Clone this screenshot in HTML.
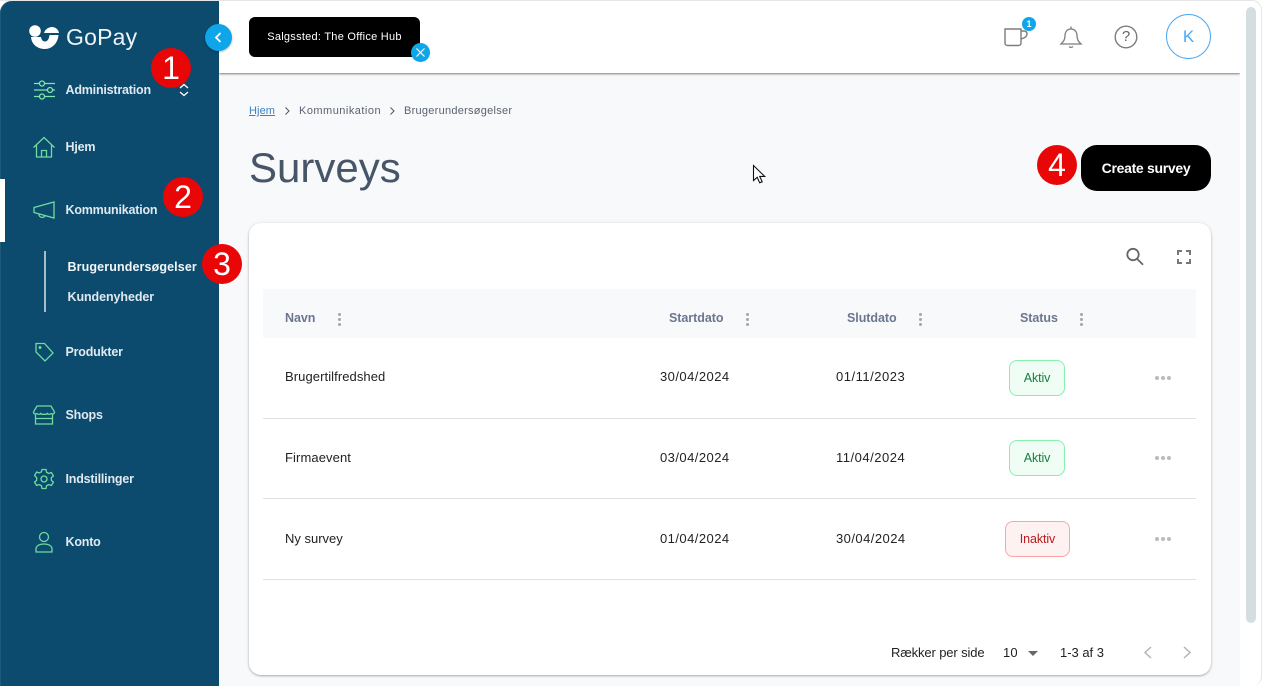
<!DOCTYPE html>
<html lang="da"><head><meta charset="utf-8"><title>Surveys</title>
<style>
*{box-sizing:border-box}
html,body{margin:0;padding:0;width:1262px;height:686px;overflow:hidden;background:#fff;font-family:"Liberation Sans",sans-serif}
.a{position:absolute;white-space:nowrap}
#win{position:absolute;left:0;top:0;width:1262px;height:686px;overflow:hidden;background:#fff}
#main{position:absolute;left:219px;top:1px;width:1021px;height:685px;background:#f8f9fb}
#head{position:absolute;left:219px;top:1px;width:1021px;height:72px;background:#fff;box-shadow:0 1px 2px rgba(0,0,0,.5);clip-path:inset(0 0 -6px 0)}
#side{position:absolute;left:0;top:1px;width:219px;height:685px;background:#0c4a6e;border-radius:12px 0 0 0;box-shadow:inset 1px 0 0 #1d5a7c}
.nav{font-size:12.5px;font-weight:bold;color:#dfe9ef;letter-spacing:-.2px;line-height:16px;left:65.500px}
.ic{position:absolute;left:32px;width:24px;height:24px;fill:none;stroke:#6fdc9f;stroke-width:1.3}
.num{position:absolute;width:40px;height:40px;border-radius:50%;background:#e90606;color:#fff;font-size:32px;line-height:40px;text-align:center}
#card{position:absolute;left:249px;top:223px;width:962px;height:452px;background:#fff;border-radius:12px;box-shadow:0 1px 2px rgba(0,0,0,.3),0 0 6px rgba(0,0,0,.05)}
.th{font-size:12.5px;font-weight:bold;color:#6b7690;line-height:16px;letter-spacing:-.05px}
.td{font-size:13px;color:#222;line-height:16px;letter-spacing:.1px}
.dt{letter-spacing:.45px}
.line{position:absolute;left:263px;width:933px;height:1px;background:#dfe1e4}
.dots{position:absolute;width:3px;height:3px;border-radius:50%;background:#a3a6ab;box-shadow:0 5px 0 #a3a6ab,0 10px 0 #a3a6ab}
.more{position:absolute;width:4px;height:4px;border-radius:50%;background:#b9bbbe;box-shadow:6px 0 0 #b9bbbe,12px 0 0 #b9bbbe}
.bg{position:absolute;border-radius:8px;font-size:12.5px;text-align:center;letter-spacing:-.1px}
.ok{left:1009px;width:56px;height:36px;line-height:34px;background:#f0fdf4;border:1px solid #86efac;color:#15803d}
.no{left:1005px;width:65px;height:36px;line-height:34px;background:#fef1f1;border:1px solid #fda4a4;color:#b91c1c}
.bc{font-size:11px;line-height:14px;color:#5b6270;top:104px}
</style></head><body><div id="win">
<div id="main"></div>
<div id="head"></div>

<!-- frame -->
<div style="position:absolute;left:0;top:0;width:1262px;height:686px;border:1px solid #e4e6e8;border-bottom:none;border-left:none;border-radius:0 10px 10px 0;pointer-events:none"></div>
<div style="position:absolute;left:1246px;top:7px;width:10px;height:616px;border-radius:5px;background:#d4dde0"></div>

<div id="side"></div>
<div style="position:absolute;left:0;top:179px;width:5px;height:63px;background:#fff"></div>

<!-- logo -->
<svg style="position:absolute;left:28px;top:24px" width="32" height="26" viewBox="0 0 32 26" fill="#fff">
<circle cx="7" cy="7" r="5.800"/>
<path d="M16 9C17 5 21 3 24 3C27.500 3 30.500 5.500 31 9Z"/>
<path d="M3 13H13C13.500 16 15 17.500 17 17.500C19.500 17.500 21 15 21.500 11H30.500C30 19 24 25 17 25C9 25 3.500 20 3 13Z"/>
</svg>
<div class="a" style="left:66px;top:22px;font-size:23px;line-height:30px;color:#eef3f6;letter-spacing:.2px">GoPay</div>
<div style="position:absolute;left:205px;top:24px;width:27px;height:27px;border-radius:50%;background:#0ea5e9;box-shadow:0 1px 2px rgba(0,0,0,.3)"></div>
<svg style="position:absolute;left:205px;top:24px" width="27" height="27" fill="none" stroke="#fff" stroke-width="1.800"><path d="M15.500 9l-4.500 4.500 4.500 4.500"/></svg>

<!-- nav -->
<svg class="ic" style="top:78px;stroke:#7fe8a8" viewBox="0 0 24 24" stroke-width="1.900"><path d="M2 5.500h5M13 5.500h10M2 12h13M21 12h2M2 18.500h5M13 18.500h10"/><circle cx="10" cy="5.500" r="2.500"/><circle cx="18" cy="12" r="2.500"/><circle cx="10" cy="18.500" r="2.500"/></svg>
<div class="a nav" style="top:82px">Administration</div>
<svg style="position:absolute;left:178px;top:83px" width="12" height="14" fill="none" stroke="#fff" stroke-width="1.300"><path d="M2 5l4-3.500L10 5M2 9l4 3.500L10 9"/></svg>

<svg class="ic" style="top:135px" viewBox="0 0 24 24"><path d="M1.500 12.500L12 2.500l10.500 10M4.500 10v12h15V10M9.500 22v-6.500h5V22"/></svg>
<div class="a nav" style="top:139px">Hjem</div>

<svg class="ic" style="top:198px" viewBox="0 0 24 24"><path d="M2 9.500L22 4v16L2 14.500zM2 9.500v5M7 16c-.5 4 5.500 4.500 6 1.500"/></svg>
<div class="a nav" style="top:202px">Kommunikation</div>

<div style="position:absolute;left:44px;top:251px;width:2px;height:61px;background:#a8bcc9"></div>
<div class="a nav" style="left:67.500px;top:259px;color:#f2f6f8;letter-spacing:.12px">Brugerundersøgelser</div>
<div class="a nav" style="left:67.500px;top:289px;letter-spacing:-.08px">Kundenyheder</div>

<svg class="ic" style="top:340px" viewBox="0 0 24 24"><path d="M4 3.500h8.500l8.500 9.500-8 8L4 12z"/><circle cx="8" cy="7.500" r=".8"/></svg>
<div class="a nav" style="top:344px">Produkter</div>

<svg class="ic" style="top:403px" viewBox="0 0 24 24"><path d="M5 3h14l3.500 6c0 2-2 2.500-3.500 1.500-1.500 1.200-3 1.200-3.500 0-1.200 1.200-5.800 1.200-7 0-.5 1.200-2 1.200-3.500 0C3.500 11.500 1.500 11 1.500 9zM3.500 11.500V21h17v-9.500M3.500 15.500h17"/></svg>
<div class="a nav" style="top:407px">Shops</div>

<svg class="ic" style="top:467px" viewBox="0 0 24 24"><circle cx="12" cy="12" r="3"/><path d="M10 2.500h4l.6 2.800 2.100 1.100 2.700-.9 2 3.400-2.100 1.900v2.400l2.100 1.900-2 3.400-2.700-.9-2.100 1.100-.6 2.800h-4l-.6-2.800-2.100-1.100-2.700.9-2-3.400 2.100-1.900v-2.400L2.600 8.400l2-3.400 2.700.9 2.100-1.100z"/></svg>
<div class="a nav" style="top:471px">Indstillinger</div>

<svg class="ic" style="top:530px" viewBox="0 0 24 24"><circle cx="12" cy="7" r="4.500"/><path d="M4 22v-3c0-3 3-5 8-5s8 2 8 5v3z"/></svg>
<div class="a nav" style="top:534px">Konto</div>

<!-- numbered markers -->
<div class="num" style="left:151px;top:48px">1</div>
<div class="num" style="left:163px;top:177px">2</div>
<div class="num" style="left:202px;top:244px">3</div>
<div class="num" style="left:1037px;top:145px">4</div>

<!-- header -->
<div class="a" style="left:249px;top:17px;width:171px;height:40px;background:#000;border-radius:6px;color:#fff;font-size:11px;line-height:40px;text-align:center;letter-spacing:.26px">Salgssted: The Office Hub</div>
<div style="position:absolute;left:411px;top:43px;width:19px;height:19px;border-radius:50%;background:#0ea5e9"></div>
<svg style="position:absolute;left:411px;top:43px" width="19" height="19" stroke="#fff" stroke-width="1.200"><path d="M5.500 5.500l8 8M13.500 5.500l-8 8"/></svg>

<svg style="position:absolute;left:1003px;top:26px" width="26" height="22" fill="none" stroke="#7c7c7c" stroke-width="1.400"><path d="M2 3h16v14c0 1.500-1 2.500-2.500 2.500h-11C3 19.500 2 18.500 2 17zM18 5h3c2 0 3 1 3 3s-2 4-6 5"/></svg>
<div style="position:absolute;left:1022px;top:17px;width:14px;height:14px;border-radius:50%;background:#0ea5e9;color:#fff;font-size:9px;font-weight:bold;line-height:14px;text-align:center">1</div>
<svg style="position:absolute;left:1059px;top:25px" width="24" height="24" fill="none" stroke="#7c7c7c" stroke-width="1.300"><path d="M12 1.500v2.500M12 4c-4 0-6 3-6 7 0 4-2 6-4 8h20c-2-2-4-4-4-8 0-4-2-7-6-7zM10 21.500c1 1.200 3 1.200 4 0"/></svg>
<svg style="position:absolute;left:1114px;top:25px" width="24" height="24" fill="none" stroke="#7c7c7c" stroke-width="1.400"><circle cx="12" cy="12" r="10.800"/></svg>
<div class="a" style="left:1114px;top:29px;width:24px;text-align:center;font-size:15px;line-height:16px;color:#666">?</div>
<div style="position:absolute;left:1166px;top:14px;width:45px;height:45px;border:1px solid #4ba8f0;border-radius:50%;color:#4ba8f0;font-size:17px;line-height:43px;text-align:center">K</div>

<!-- breadcrumb -->
<div class="a bc" style="left:249px;color:#3b82c4;text-decoration:underline;letter-spacing:.1px">Hjem</div>
<svg style="position:absolute;left:284px;top:106px" width="8" height="10" fill="none" stroke="#555" stroke-width="1"><path d="M1.500 1.500L5 5 1.500 8.500"/></svg>
<div class="a bc" style="left:299px;letter-spacing:.48px">Kommunikation</div>
<svg style="position:absolute;left:389px;top:106px" width="8" height="10" fill="none" stroke="#555" stroke-width="1"><path d="M1.500 1.500L5 5 1.500 8.500"/></svg>
<div class="a bc" style="left:404px;letter-spacing:.26px">Brugerundersøgelser</div>

<div class="a" style="left:249px;top:143px;font-size:42px;line-height:50px;color:#475569">Surveys</div>
<div class="a" style="left:1081px;top:145px;width:130px;height:46px;background:#000;border-radius:16px;color:#fff;font-size:14px;font-weight:bold;line-height:46px;text-align:center;letter-spacing:-.3px">Create survey</div>

<!-- cursor -->
<svg style="position:absolute;left:752px;top:164px" width="16" height="22"><path d="M1.500 1.500v15l3.700-3.200 2.500 5.500 2.500-1-2.500-5.400 5 0z" fill="#fff" stroke="#111" stroke-width="1.100"/></svg>

<div id="card"></div>
<svg style="position:absolute;left:1124px;top:246px" width="21" height="21" fill="none" stroke="#666" stroke-width="1.800"><circle cx="9" cy="8.500" r="5.700"/><path d="M13 12.700l6 6"/></svg>
<svg style="position:absolute;left:1176px;top:249px" width="16" height="16" fill="none" stroke="#777" stroke-width="2"><path d="M2 6V2h4M10 2h4v4M14 10v4h-4M6 14H2v-4"/></svg>

<div style="position:absolute;left:263px;top:289px;width:933px;height:49px;background:#f8f9fb"></div>
<div class="a th" style="left:285px;top:310px">Navn</div><div class="dots" style="left:338px;top:313px"></div>
<div class="a th" style="left:669px;top:310px">Startdato</div><div class="dots" style="left:746px;top:313px"></div>
<div class="a th" style="left:847px;top:310px">Slutdato</div><div class="dots" style="left:919px;top:313px"></div>
<div class="a th" style="left:1020px;top:310px">Status</div><div class="dots" style="left:1080px;top:313px"></div>

<div class="a td" style="left:285px;top:369px;letter-spacing:.08px">Brugertilfredshed</div>
<div class="a td dt" style="left:660px;top:369px">30/04/2024</div>
<div class="a td dt" style="left:836px;top:369px;letter-spacing:.52px">01/11/2023</div>
<div class="bg ok" style="top:360px">Aktiv</div>
<div class="more" style="left:1155px;top:376px"></div>
<div class="line" style="top:418px"></div>

<div class="a td" style="left:285px;top:450px">Firmaevent</div>
<div class="a td dt" style="left:660px;top:450px">03/04/2024</div>
<div class="a td dt" style="left:836px;top:450px;letter-spacing:.52px">11/04/2024</div>
<div class="bg ok" style="top:440px">Aktiv</div>
<div class="more" style="left:1155px;top:456px"></div>
<div class="line" style="top:498px"></div>

<div class="a td" style="left:285px;top:531px;letter-spacing:0">Ny survey</div>
<div class="a td dt" style="left:660px;top:531px">01/04/2024</div>
<div class="a td dt" style="left:836px;top:531px">30/04/2024</div>
<div class="bg no" style="top:521px">Inaktiv</div>
<div class="more" style="left:1155px;top:537px"></div>
<div class="line" style="top:579px"></div>

<div class="a td" style="left:891px;top:645px;letter-spacing:-.13px">Rækker per side</div>
<div class="a td" style="left:1003px;top:645px">10</div>
<svg style="position:absolute;left:1027px;top:650px" width="12" height="7"><path d="M1 1h10L6 6z" fill="#666"/></svg>
<div class="a td" style="left:1060px;top:645px;letter-spacing:-.02px">1-3 af 3</div>
<svg style="position:absolute;left:1142px;top:645px" width="12" height="15" fill="none" stroke="#b5b5b5" stroke-width="1.500"><path d="M9 2L3 7.500 9 13"/></svg>
<svg style="position:absolute;left:1181px;top:645px" width="12" height="15" fill="none" stroke="#b5b5b5" stroke-width="1.500"><path d="M3 2l6 5.500L3 13"/></svg>
</div></body></html>
